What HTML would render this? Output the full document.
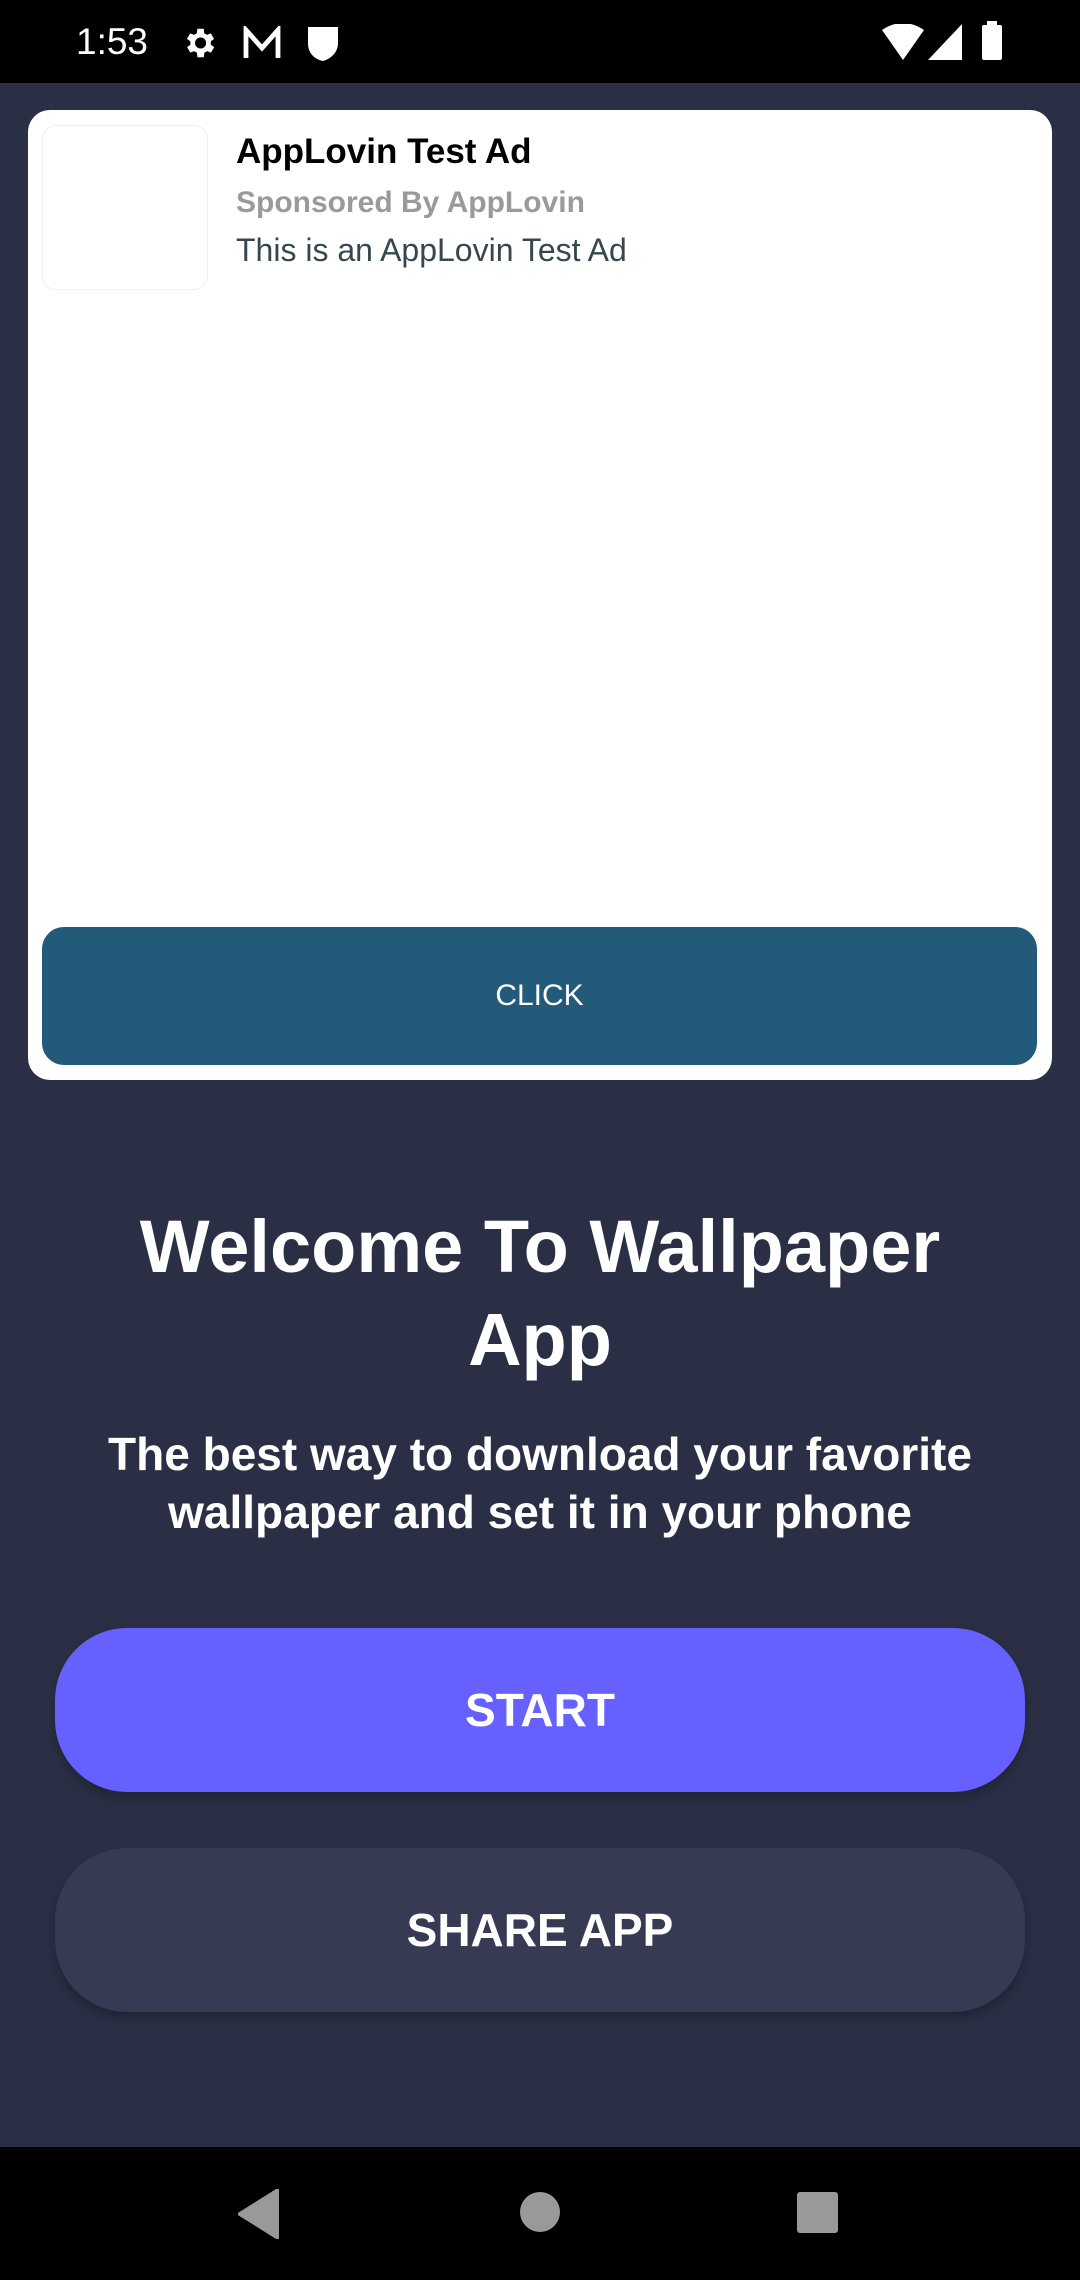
<!DOCTYPE html>
<html><head><meta charset="utf-8"><style>
*{margin:0;padding:0;box-sizing:border-box}
body{width:1080px;height:2280px;background:#2a2f45;font-family:"Liberation Sans",sans-serif;position:relative;overflow:hidden}
.abs{position:absolute}
.status{left:0;top:0;width:1080px;height:83px;background:#000;color:#fff}
.card{left:28px;top:110px;width:1024px;height:970px;background:#fff;border-radius:22px}
.iconbox{left:14px;top:15px;width:166px;height:165px;border:1px solid #eee;border-radius:14px}
.click{left:14px;top:817px;width:995px;height:138px;background:#235a7a;border-radius:22px;color:#fff;font-size:30px;text-align:center;line-height:138px}
.t{color:#fff;font-weight:bold;text-align:center;width:1080px;left:0}
.btn{left:55px;width:970px;height:164px;border-radius:72px;color:#fff;font-weight:bold;font-size:46px;text-align:center;line-height:164px;box-shadow:0 6px 10px rgba(0,0,0,.25)}
.nav{left:0;top:2147px;width:1080px;height:133px;background:#000}
</style></head><body>
<div class="abs status">
 <div class="abs" style="left:76px;top:21px;font-size:37px">1:53</div>
 <svg class="abs" style="left:180px;top:24px" width="38" height="38" viewBox="0 0 24 24"><path fill="#fff" d="M19.4 13a7.5 7.5 0 000-2l2.1-1.6-2-3.5-2.5 1a7 7 0 00-1.7-1L15 3h-4l-.4 2.9a7 7 0 00-1.7 1l-2.5-1-2 3.5L6.6 11a7.5 7.5 0 000 2l-2.1 1.6 2 3.5 2.5-1a7 7 0 001.7 1L11 21h4l.4-2.9a7 7 0 001.7-1l2.5 1 2-3.5zM13 15.5A3.5 3.5 0 1113 8.5a3.5 3.5 0 010 7z"/></svg>
 <svg class="abs" style="left:242px;top:26px" width="40" height="34" viewBox="0 0 20 17"><path fill="none" stroke="#fff" stroke-width="2.4" d="M2 16V2l8 9 8-9v14"/></svg>
 <svg class="abs" style="left:306px;top:25px" width="34" height="36" viewBox="0 0 17 18"><path fill="#fff" d="M1 1h15v8c0 5-4 8-7.5 9C4 17 1 14 1 9z"/></svg>
 <svg class="abs" style="left:882px;top:24px" width="42" height="36" viewBox="0 0 42 36"><path fill="#fff" d="M0 6Q21-8 42 6L21 36z"/></svg>
 <svg class="abs" style="left:928px;top:24px" width="34" height="36"><path fill="#fff" d="M34 0V36H0z"/></svg>
 <div class="abs" style="left:982px;top:25px;width:20px;height:35px;background:#fff;border-radius:2px"></div>
 <div class="abs" style="left:987px;top:21px;width:10px;height:5px;background:#fff"></div>
</div>
<div class="abs card">
 <div class="abs iconbox"></div>
 <div class="abs" style="left:208px;top:22px;font-size:35px;font-weight:bold;color:#000">AppLovin Test Ad</div>
 <div class="abs" style="left:208px;top:76px;font-size:30px;font-weight:bold;color:#9a9a9a">Sponsored By AppLovin</div>
 <div class="abs" style="left:208px;top:122px;font-size:32px;color:#37474f">This is an AppLovin Test Ad</div>
 <div class="abs click">CLICK</div>
</div>
<div class="abs t" style="top:1200px;font-size:74px;line-height:93px">Welcome To Wallpaper<br>App</div>
<div class="abs t" style="top:1425px;font-size:46px;line-height:58px">The best way to download your favorite<br>wallpaper and set it in your phone</div>
<div class="abs btn" style="top:1628px;background:#6660ff">START</div>
<div class="abs btn" style="top:1848px;background:#363a52">SHARE APP</div>
<div class="abs nav">
 <svg class="abs" style="left:238px;top:42px" width="42" height="50"><path fill="#999" d="M40 0V50L0 25z" stroke="#999" stroke-linejoin="round" stroke-width="2"/></svg>
 <div class="abs" style="left:520px;top:45px;width:40px;height:40px;border-radius:50%;background:#999"></div>
 <div class="abs" style="left:797px;top:45px;width:41px;height:41px;border-radius:3px;background:#999"></div>
</div>
</body></html>
